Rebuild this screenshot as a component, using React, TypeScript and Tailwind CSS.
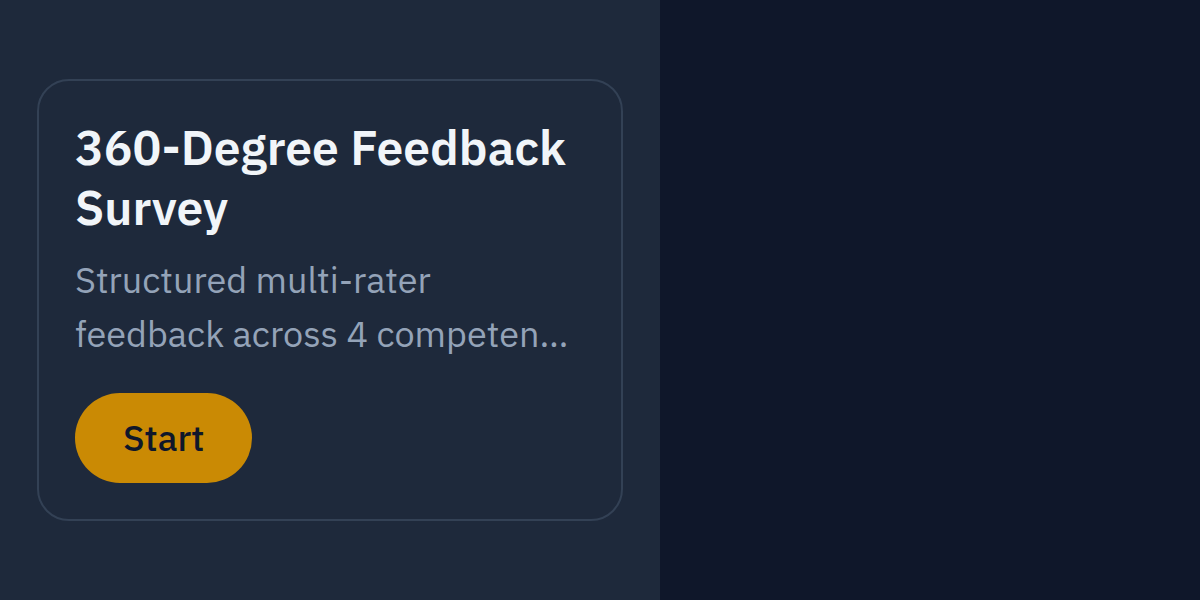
export default function App() {
  return (
    <div
      className="flex h-[600px] w-[1200px] bg-[#0f172a]"
      style={{ fontFamily: '"IBM Plex Sans", "Noto Sans", "Open Sans", sans-serif' }}
    >
      <section className="flex w-[660px] items-center justify-center bg-[#1e293b]">
        <div className="flex w-[586px] flex-col items-start rounded-[32px] border-2 border-[#334155] bg-[#1e293b] p-9">
          <h2 className="text-[48px] leading-[60px] font-semibold text-[#f1f5f9]">
            360-Degree Feedback Survey
          </h2>
          <p className="mt-4 line-clamp-2 text-[36px] leading-[54px] text-[#94a3b8]">
            Structured multi-rater feedback across 4 competency areas, covering
            peers, managers and direct reports.
          </p>
          <button className="mt-8 rounded-full bg-[#ca8a04] px-12 py-[18px] text-[36px] leading-[54px] font-medium text-[#0f172a]">
            Start
          </button>
        </div>
      </section>
      <section className="flex-1" />
    </div>
  );
}
